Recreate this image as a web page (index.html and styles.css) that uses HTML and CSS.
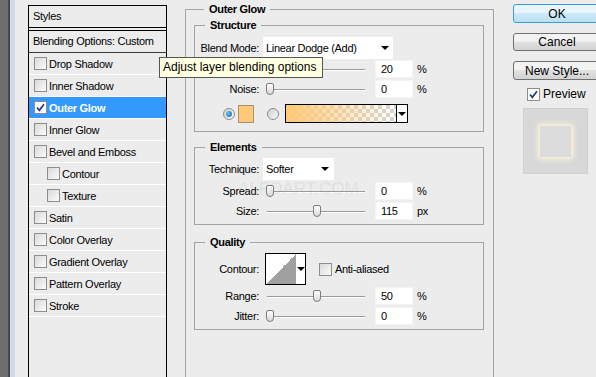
FILE: index.html
```html
<!DOCTYPE html>
<html lang="en">
  <head>
    <meta charset="UTF-8" />
    <title>Layer Style</title>
    <link rel="stylesheet" href="styles.css">
  </head>
  <body>
    <div class="dialog">
      <div class="edge"></div>

      <!-- Styles list -->
      <div class="styles-list">
        <div class="list-head">Styles</div>
        <div class="list-blend">Blending Options: Custom</div>
        <div class="list-item"><span class="check"></span>Drop Shadow</div>
        <div class="list-item"><span class="check"></span>Inner Shadow</div>
        <div class="list-item selected">
          <span class="check checked">
            <svg width="11" height="11" viewBox="0 0 11 11"><path d="M2 5.5 L4.3 8.3 L9 2.2" fill="none" stroke="#22378f" stroke-width="1.7"/></svg>
          </span>Outer Glow
        </div>
        <div class="list-item"><span class="check"></span>Inner Glow</div>
        <div class="list-item"><span class="check"></span>Bevel and Emboss</div>
        <div class="list-item sub"><span class="check"></span>Contour</div>
        <div class="list-item sub"><span class="check"></span>Texture</div>
        <div class="list-item"><span class="check"></span>Satin</div>
        <div class="list-item"><span class="check"></span>Color Overlay</div>
        <div class="list-item"><span class="check"></span>Gradient Overlay</div>
        <div class="list-item"><span class="check"></span>Pattern Overlay</div>
        <div class="list-item"><span class="check"></span>Stroke</div>
      </div>

      <!-- Outer Glow settings -->
      <fieldset class="group main">
        <legend>Outer Glow</legend>

        <fieldset class="group inner structure">
          <legend>Structure</legend>
          <div class="row row-select">
            <span class="lbl">Blend Mode:</span>
            <div class="select select-blend">Linear Dodge (Add)<span class="arrow"></span></div>
          </div>
          <!-- opacity row: its label sits under the tooltip -->
          <div class="row row-slider first">
            <span class="lbl"></span>
            <div class="slider"><span class="thumb" style="left: 18px"></span></div>
            <div class="num">20</div><span class="unit">%</span>
          </div>
          <div class="row row-slider">
            <span class="lbl">Noise:</span>
            <div class="slider"><span class="thumb" style="left: 0px"></span></div>
            <div class="num">0</div><span class="unit">%</span>
          </div>
          <div class="row row-color">
            <span class="radio on"></span>
            <span class="swatch"></span>
            <span class="radio"></span>
            <div class="gradient"><span class="grad-fill"></span><span class="grad-arrow"><span class="arrow"></span></span></div>
          </div>
        </fieldset>

        <fieldset class="group inner elements">
          <legend>Elements</legend>
          <div class="row row-select">
            <span class="lbl">Technique:</span>
            <div class="select select-tech">Softer<span class="arrow"></span></div>
          </div>
          <div class="row row-slider">
            <span class="lbl">Spread:</span>
            <div class="slider"><span class="thumb" style="left: 0px"></span></div>
            <div class="num">0</div><span class="unit">%</span>
          </div>
          <div class="row row-slider">
            <span class="lbl">Size:</span>
            <div class="slider"><span class="thumb" style="left: 47px"></span></div>
            <div class="num">115</div><span class="unit">px</span>
          </div>
        </fieldset>

        <fieldset class="group inner quality">
          <legend>Quality</legend>
          <div class="row row-contour">
            <span class="lbl">Contour:</span>
            <div class="contour"><span class="contour-curve"></span><span class="contour-arrow"><span class="arrow"></span></span></div>
            <span class="check aa-check"></span><span class="aa-label">Anti-aliased</span>
          </div>
          <div class="row row-slider">
            <span class="lbl">Range:</span>
            <div class="slider"><span class="thumb" style="left: 47px"></span></div>
            <div class="num">50</div><span class="unit">%</span>
          </div>
          <div class="row row-slider">
            <span class="lbl">Jitter:</span>
            <div class="slider"><span class="thumb" style="left: 0px"></span></div>
            <div class="num">0</div><span class="unit">%</span>
          </div>
        </fieldset>
      </fieldset>

      <!-- Buttons -->
      <div class="buttons">
        <button class="btn btn-ok">OK</button>
        <button class="btn btn-cancel">Cancel</button>
        <button class="btn btn-new">New Style...</button>
        <div class="preview-row">
          <span class="check checked">
            <svg width="11" height="11" viewBox="0 0 11 11"><path d="M2 5.5 L4.3 8.3 L9 2.2" fill="none" stroke="#22378f" stroke-width="1.7"/></svg>
          </span>Preview
        </div>
        <div class="preview-box"><span class="preview-square"></span></div>
      </div>
    </div>

    <div class="watermark">ALFOART.COM</div>
    <div class="tooltip">Adjust layer blending options</div>
  </body>
</html>
```

FILE: styles.css
```css
* {
  box-sizing: border-box;
}
body {
  margin: 0;
  height: 377px;
  overflow: hidden;
  position: relative;
  background-color: #ececec;
  font-family: "Liberation Sans", Arial, sans-serif;
  font-size: 11px;
  letter-spacing: -0.3px;
  color: #000;
}
.dialog {
  display: flex;
  align-items: flex-start;
  height: 377px;
  overflow: hidden;
}
.edge {
  flex: none;
  width: 28px;
  height: 377px;
  background: linear-gradient(to right, #6e6e6e 0 8px, #494949 8px 10px, #d2dbe5 10px 15px, #ececec 15px);
}

/* Styles list */
.styles-list {
  flex: none;
  width: 139px;
  height: 372px;
  margin-top: 5px;
  border: 1px solid #000;
  border-bottom: none;
}
.list-head {
  height: 22px;
  line-height: 21px;
  padding-left: 4px;
  border-bottom: 1px solid #000;
  margin-bottom: 2px;
}
.list-blend {
  height: 23px;
  line-height: 21px;
  padding-left: 4px;
  border-top: 1px solid #000;
  border-bottom: 1px solid #3c3c3c;
}
.list-item {
  display: flex;
  align-items: center;
  height: 22px;
  padding-left: 5px;
  border-bottom: 1px solid #fff;
}
.list-item.sub {
  padding-left: 18px;
}
.list-item.selected {
  background-color: #3399ff;
  color: #fff;
  font-weight: bold;
}
.check {
  flex: none;
  display: inline-flex;
  align-items: center;
  justify-content: center;
  width: 13px;
  height: 13px;
  margin-right: 2px;
  border: 1px solid #8d8d8d;
  background: linear-gradient(135deg, #d9d9d9, #fbfbfb);
}
.check.checked {
  background: #fff;
}

/* Group boxes */
.group {
  margin: 0;
  padding: 0;
  min-width: 0;
  border: 1px solid #a3a3a3;
}
.group legend {
  font-weight: bold;
  line-height: 14px;
  padding: 0 5px;
  margin-left: 10px;
}
.main {
  flex: none;
  width: 309px;
  height: 375px;
  margin-left: 18px;
  margin-top: 2px;
  padding: 0 9px 0 8px;
  border-bottom: none;
}
.inner {
  width: 290px;
}
.structure {
  margin-top: 2px;
  padding: 5px 0 8px;
}
.elements {
  margin-top: 8px;
  padding: 4px 0 4px;
}
.quality {
  margin-top: 10px;
  padding: 4px 0 4px;
}

/* Rows */
.row {
  display: flex;
  align-items: center;
}
.lbl {
  flex: none;
  width: 64px;
  margin-right: 4px;
  text-align: right;
}
.row-select {
  height: 22px;
}
.row-slider {
  height: 18px;
  margin-top: 2px;
}
.row-slider.first {
  margin-top: 1px;
}
.select {
  display: flex;
  align-items: center;
  justify-content: space-between;
  height: 22px;
  padding: 0 4px 0 3px;
  background-color: #fff;
}
.select-blend {
  width: 130px;
}
.select-tech {
  width: 71px;
  padding-right: 5px;
}
.arrow {
  width: 0;
  height: 0;
  border-top: 4px solid #000;
  border-left: 4px solid transparent;
  border-right: 4px solid transparent;
}

/* Slider + number field */
.slider {
  position: relative;
  flex: none;
  width: 100px;
  height: 18px;
  margin-left: 3px;
}
.slider::before {
  content: "";
  position: absolute;
  left: 1px;
  right: 1px;
  top: 9px;
  height: 1px;
  background-color: #9a9a9a;
  box-shadow: 0 1px 0 #fff;
}
.thumb {
  position: absolute;
  top: 3px;
  width: 8px;
  height: 12px;
  border: 1px solid #7c7c7c;
  border-radius: 2px 2px 4px 4px;
  background: linear-gradient(#ffffff, #d8d8d8);
}
.num {
  flex: none;
  width: 38px;
  height: 18px;
  margin-left: 9px;
  padding-left: 5px;
  line-height: 17px;
  background-color: #fff;
  border: 1px solid #f4f4f4;
}
.unit {
  margin-left: 4px;
}

/* Color row */
.row-color {
  height: 19px;
  margin-top: 6px;
}
.radio {
  flex: none;
  display: inline-flex;
  align-items: center;
  justify-content: center;
  width: 12px;
  height: 12px;
  margin-left: 13px;
  border: 1px solid #8a8a8a;
  border-radius: 50%;
  background: linear-gradient(135deg, #cfcfcf, #fafafa);
}
.radio.on {
  margin-left: 28px;
}
.radio.on::after {
  content: "";
  width: 6px;
  height: 6px;
  border-radius: 50%;
  background: radial-gradient(circle at 35% 35%, #6fc0f0, #0a5fa8);
}
.swatch {
  flex: none;
  width: 16px;
  height: 18px;
  margin-left: 3px;
  background-color: #ffc97a;
  border: 1px solid #a89070;
}
.gradient {
  display: flex;
  width: 123px;
  height: 19px;
  margin-left: 6px;
  border: 1px solid #000;
}
.grad-fill {
  flex: 1;
  background: linear-gradient(to right, #ffc977 0%, rgba(255, 201, 119, 0) 100%),
    repeating-conic-gradient(#d4d4d4 0 25%, #fff 0 50%) 0 0 / 8px 8px;
}
.grad-arrow {
  display: flex;
  align-items: center;
  justify-content: center;
  width: 11px;
  border-left: 1px solid #000;
  background-color: #fff;
}

/* Contour */
.row-contour {
  height: 32px;
}
.contour {
  display: flex;
  width: 41px;
  height: 32px;
  margin-left: 2px;
  border: 1px solid #000;
  background-color: #fff;
}
.contour-curve {
  width: 30px;
  background: linear-gradient(to top left, #a0a0a0 50%, #fff 50%);
}
.contour-arrow {
  flex: 1;
  display: flex;
  align-items: center;
  justify-content: center;
}
.aa-check {
  margin-left: 13px;
}
.aa-label {
  margin-left: 1px;
}

/* Buttons */
.buttons {
  flex: none;
  display: flex;
  flex-direction: column;
  width: 88px;
  margin-left: 19px;
}
.btn {
  height: 19px;
  padding: 0;
  border: 1px solid #707070;
  border-radius: 3px;
  background: linear-gradient(#f3f3f3 0 45%, #e2e2e2 50%, #d2d2d2);
  font-family: "Liberation Sans", Arial, sans-serif;
  font-size: 12px;
  letter-spacing: 0;
  color: #000;
}
.btn-ok {
  margin-top: 4px;
  border-color: #3a9bd8;
  background: linear-gradient(#e8f5fc 0 45%, #cde9f8 50%, #b9dff4);
}
.btn-cancel {
  height: 18px;
  margin-top: 10px;
}
.btn-new {
  margin-top: 10px;
}
.preview-row {
  display: flex;
  align-items: center;
  height: 14px;
  margin-top: 7px;
  padding-left: 14px;
  font-size: 12px;
  letter-spacing: 0;
}
.preview-row .check {
  margin-right: 3px;
}
.preview-box {
  display: flex;
  align-items: center;
  justify-content: center;
  width: 65px;
  height: 66px;
  margin-top: 7px;
  margin-left: 10px;
  background-color: #d8d8d8;
  border: 1px solid #d0d0d0;
}
.preview-square {
  width: 31px;
  height: 31px;
  background-color: #dcdcdc;
  box-shadow: 0 0 5px 2px #fff6d8;
}

/* Overlays */
.tooltip {
  position: absolute;
  left: 159px;
  top: 57px;
  width: 164px;
  height: 21px;
  padding-left: 3px;
  line-height: 19px;
  font-size: 12px;
  letter-spacing: 0;
  background-color: #ffffe1;
  border: 1px solid #555;
}
.watermark {
  position: absolute;
  left: 238px;
  top: 179px;
  font-size: 17px;
  letter-spacing: 0;
  color: rgba(120, 120, 120, 0.12);
}
```
